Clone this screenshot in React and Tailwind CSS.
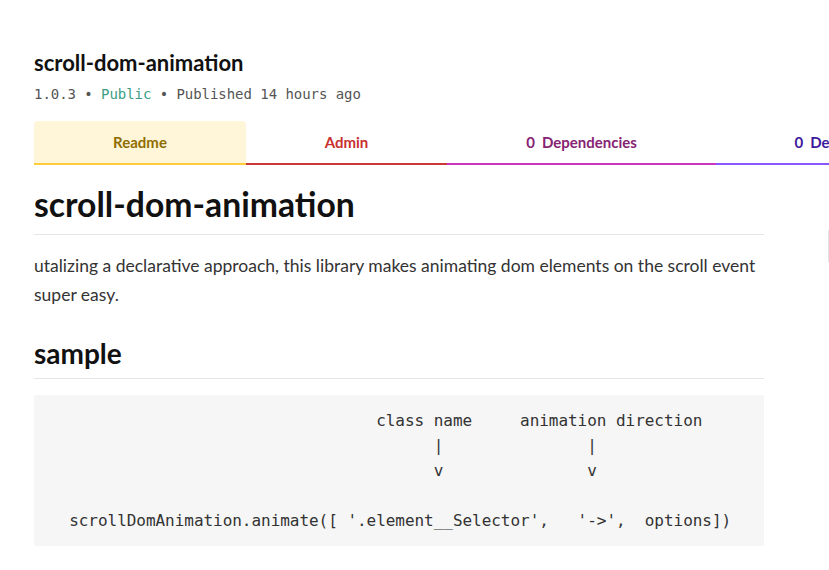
export default function App() {
  const code = [
    "                                  class name     animation direction",
    "                                        |               |",
    "                                        v               v",
    "",
    "  scrollDomAnimation.animate([ '.element__Selector',   '->',  options])",
  ];

  return (
    <div className="w-[829px] h-[570px] overflow-hidden bg-white font-['Lato',sans-serif] text-[#111]">
      <div className="pl-[34px] pt-[48px]">
        {/* package header */}
        <h2 className="text-[22px] leading-[30px] font-bold">scroll-dom-animation</h2>
        <div className="mt-[6px] font-['DejaVu_Sans_Mono',monospace] text-[14px] leading-[20px] text-[#555] tracking-[-0.05px]">
          <span>1.0.3</span>
          <span> • </span>
          <span className="text-[#3a9d85]">Public</span>
          <span> • </span>
          <span>Published 14 hours ago</span>
        </div>

        {/* tabs */}
        <div className="mt-[17px] flex w-max text-[15px] font-bold">
          <div className="w-[212px] h-[44px] flex items-center justify-center bg-[#fff5d8] rounded-t-[4px] border-b-2 border-[#ffcd3a] text-[#8f6d00]">
            Readme
          </div>
          <div className="w-[201px] h-[44px] flex items-center justify-center border-b-2 border-[#cb3837] text-[#c8302f]">
            Admin
          </div>
          <div className="w-[269px] h-[44px] flex items-center justify-center border-b-2 border-[#c836c3] text-[#862373]">
            <span className="mr-[7px]">0</span>Dependencies
          </div>
          <div className="w-[254px] h-[44px] flex items-center justify-center border-b-2 border-[#8956ff] text-[#3b1a9c]">
            <span className="mr-[7px]">0</span>Dependents
          </div>
        </div>

        <div className="flex gap-[64px]">
          {/* readme */}
          <div className="w-[730px] shrink-0">
            <h1 className="mt-[17px] text-[33.7px] leading-[44px] font-bold pb-[8px] border-b border-[#e6e6e6]">
              scroll-dom-animation
            </h1>
            <p className="mt-[16px] text-[17.5px] leading-[29px] text-[#333]">
              utalizing a declarative approach, this library makes animating dom elements on the scroll event super easy.
            </p>
            <h2 className="mt-[26px] text-[28px] leading-[36px] font-bold pb-[7px] border-b border-[#e6e6e6]">sample</h2>
            <pre className="mt-[16px] bg-[#f6f6f6] rounded-[2px] px-[16px] py-[13px] font-['DejaVu_Sans_Mono',monospace] text-[16px] leading-[25px] tracking-[-0.04px] text-[#333]">
              {code.join("\n")}
            </pre>
          </div>

          {/* sidebar, mostly cut off */}
          <div className="w-[300px] shrink-0 pt-[65px]">
            <div className="h-[32px] border-l-2 border-[#e2e2e2]" />
          </div>
        </div>
      </div>
    </div>
  );
}
